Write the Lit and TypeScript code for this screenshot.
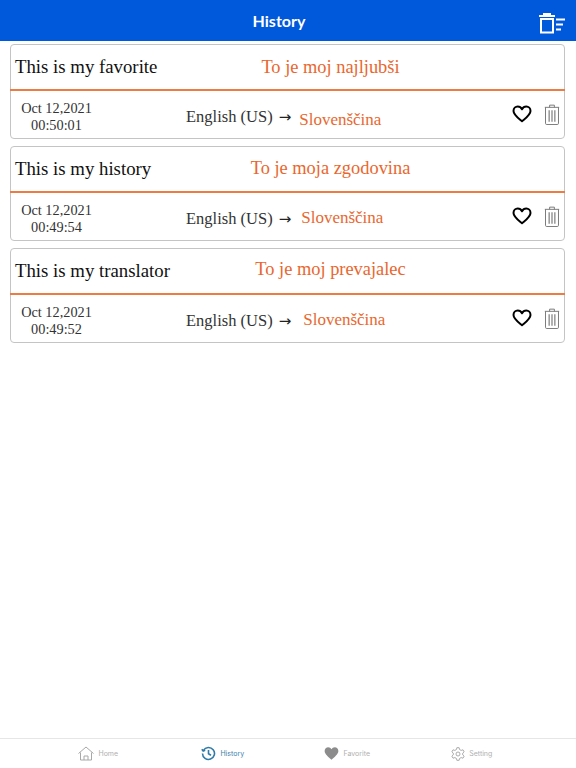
import { LitElement, html, css, svg } from "lit";
import { customElement } from "lit/decorators.js";

const rows = [
  { src: "This is my favorite", tr: "To je moj najljubši", date: "Oct 12,2021", time: "00:50:01", gap: 2, trDy: 0, toDy: 3 },
  { src: "This is my history", tr: "To je moja zgodovina", date: "Oct 12,2021", time: "00:49:54", gap: 4, trDy: -1, toDy: -1 },
  { src: "This is my translator", tr: "To je moj prevajalec", date: "Oct 12,2021", time: "00:49:52", gap: 6, trDy: -2, toDy: -1 },
];

const heart = svg`<svg class="heart" viewBox="0 0 20 18" width="20" height="18"><path d="M10 16.3 C6 13 1.5 9.8 1.5 6 C1.5 3.4 3.5 1.6 5.7 1.6 C7.6 1.6 9.1 2.6 10 4.3 C10.9 2.6 12.4 1.6 14.3 1.6 C16.5 1.6 18.5 3.4 18.5 6 C18.5 9.8 14 13 10 16.3 Z" fill="none" stroke="#000" stroke-width="2" stroke-linejoin="round"/></svg>`;
const trash = svg`<svg class="trash" viewBox="0 0 16 22" width="16" height="21" fill="none" stroke="#777" stroke-width="1"><path d="M.5 3.5H15.5M5.5 3.5V1.2H10.5V3.5M1.2 3.5V20.2Q1.2 21.5 2.5 21.5H13.5Q14.8 21.5 14.8 20.2V3.5"/><path d="M5 6.5V18.5M8 6.5V18.5M11 6.5V18.5" stroke-width="1.2"/></svg>`;

@customElement("app-root")
export class AppRoot extends LitElement {
  static styles = css`
    :host { display: flex; flex-direction: column; height: 768px; width: 576px; background: #fff; font-family: "Liberation Serif", serif; overflow: hidden; }
    .top { height: 41px; flex: none; box-sizing: border-box; padding-right: 18px; background: #0058db; display: flex; align-items: center; justify-content: center; position: relative; color: #fff; font-family: "Lato", sans-serif; font-size: 16px; font-weight: 700; }
    .clear { position: absolute; right: 11px; top: 13px; }
    .list { flex: 1; display: flex; flex-direction: column; gap: 7px; padding: 3px 11px 0 10px; }
    .card { height: 95px; box-sizing: border-box; border: 1px solid #c4c4c4; border-radius: 4px; display: flex; flex-direction: column; }
    .head { height: 44px; flex: none; display: grid; grid-template-columns: 150px 1fr; align-items: center; padding-left: 4px; }
    .src { font-size: 18.8px; color: #111; white-space: nowrap; }
    .tr { font-size: 18.4px; color: #e9672e; text-align: center; padding-right: 68px; white-space: nowrap; }
    .rule { height: 2px; flex: none; background: #ec7c43; margin: 0 -1px; }
    .foot { flex: 1; display: grid; grid-template-columns: 165px 1fr auto; align-items: center; padding: 0 4px 0 10px; }
    .when { font-size: 14.3px; line-height: 17px; color: #333; text-align: center; width: 71px; white-space: nowrap; padding-top: 4px; }
    .langs { font-size: 16.5px; color: #333; display: flex; align-items: center; white-space: nowrap; padding-top: 4px; }
    .arrow { margin-left: 6px; font-size: 15px; font-family: "DejaVu Sans", sans-serif; color: #222; }
    .to { color: #e9672e; font-size: 17px; }
    .acts { display: flex; align-items: center; gap: 12px; }
    .heart { margin-bottom: 1px; }
    .tabs { height: 29px; flex: none; border-top: 1px solid #e6e6e6; display: grid; grid-template-columns: repeat(4, 1fr); padding: 0 42px 0 36px; }
    .tab { display: flex; align-items: center; justify-content: center; gap: 4px; font-family: "Inter", "Liberation Sans", sans-serif; font-size: 7px; color: #b0b0b0; }
    .tab.on { color: #3d81ad; }
  `;

  render() {
    return html`
      <div class="top">History
        <svg class="clear" width="26" height="21" viewBox="0 0 26 21" fill="none" stroke="#fff" stroke-width="2">
          <path d="M0 3H16M5 3V1H11V3M2 6H14V19.5H2Z"/>
          <path d="M17 6.5H26M17 11.5H24M17 16.5H22"/>
        </svg>
      </div>
      <div class="list">
        ${rows.map((r) => html`
          <div class="card">
            <div class="head"><div class="src">${r.src}</div><div class="tr" style="transform:translateY(${r.trDy}px)">${r.tr}</div></div>
            <div class="rule"></div>
            <div class="foot">
              <div class="when">${r.date}<br />${r.time}</div>
              <div class="langs">English (US)<span class="arrow" style="margin-right:${6 + r.gap}px">→</span><span class="to" style="transform:translateY(${r.toDy}px)">Slovenščina</span></div>
              <div class="acts">${heart}${trash}</div>
            </div>
          </div>`)}
      </div>
      <div class="tabs">
        <div class="tab">
          <svg width="16" height="15" viewBox="0 0 16 15" fill="none" stroke="#a8a8a8" stroke-width="1"><path d="M.5 7.5 8 1l7.5 6.5M2.5 6.5V14H13.5V6.5M6 14V10H10V14"/></svg>Home
        </div>
        <div class="tab on">
          <svg width="15" height="15" viewBox="0 0 15 15" fill="none" stroke="#2f7aa8" stroke-width="1.6"><path d="M2.4 4.3A6 6 0 1 1 1.5 7.5M.8 3.2 2.2 5l2-.8M7.5 4V7.8L10 9.3"/></svg>History
        </div>
        <div class="tab">
          <svg width="15" height="13" viewBox="0 0 20 18"><path d="M10 17.5C6 14 .5 10 .5 5.5 .5 2.6 2.8.5 5.5.5 7.4.5 9.1 1.5 10 3.2 10.9 1.5 12.6.5 14.5.5 17.2.5 19.5 2.6 19.5 5.5 19.5 10 14 14 10 17.5Z" fill="#8c8c8c"/></svg>Favorite
        </div>
        <div class="tab">
          <svg width="14" height="14" viewBox="0 0 16 16" fill="none" stroke="#a0a0a0" stroke-width="1"><path d="M6.7.8H9.3L9.8 2.9 11.6 3.9 13.7 3.2 15 5.5 13.4 7V9L15 10.5 13.7 12.8 11.6 12.1 9.8 13.1 9.3 15.2H6.7L6.2 13.1 4.4 12.1 2.3 12.8 1 10.5 2.6 9V7L1 5.5 2.3 3.2 4.4 3.9 6.2 2.9Z"/><circle cx="8" cy="8" r="2.3"/></svg>Setting
        </div>
      </div>
    `;
  }
}
